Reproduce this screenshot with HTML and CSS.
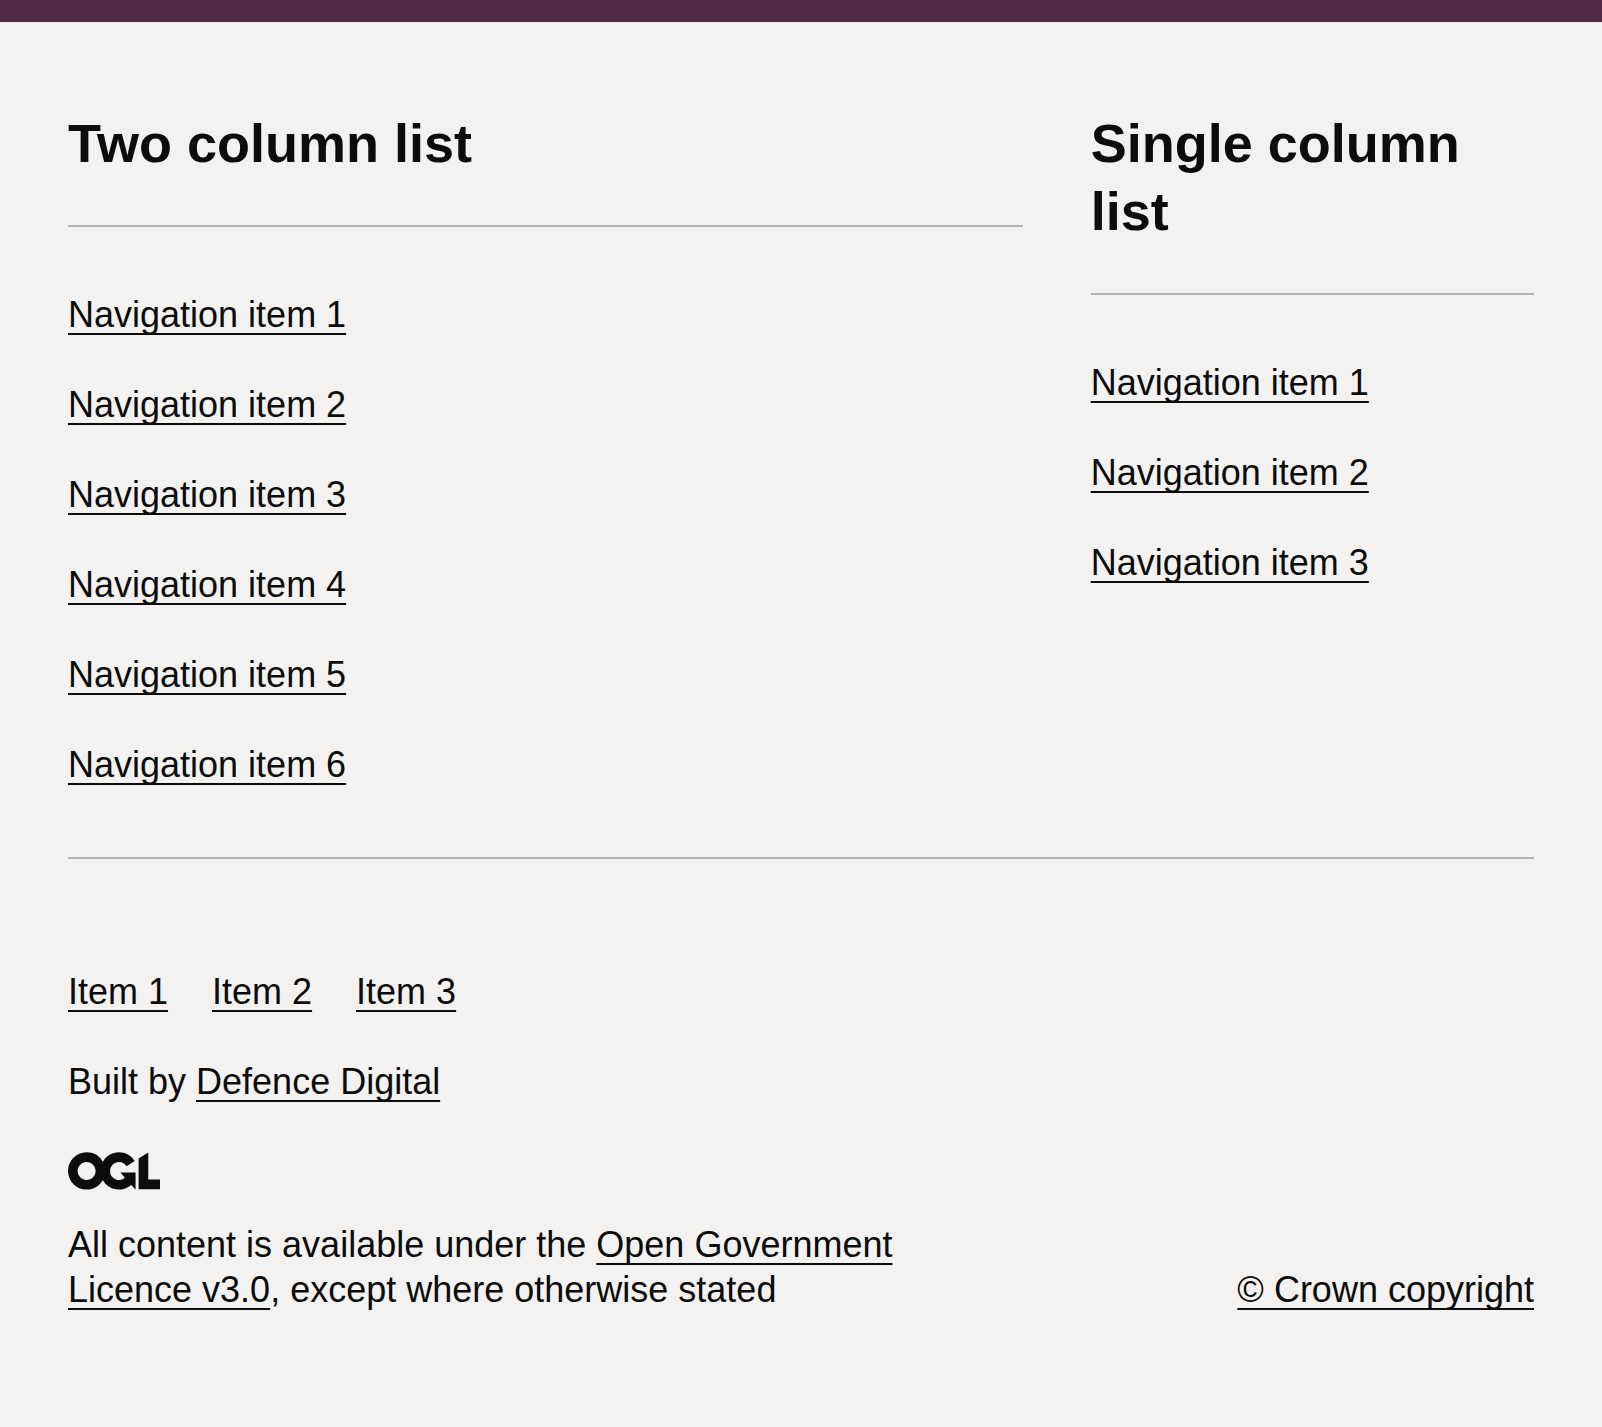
FILE: index.html
```html
<!DOCTYPE html>
<html lang="en">
<head>
<meta charset="utf-8">
<meta name="viewport" content="width=device-width, initial-scale=1">
<title>Footer</title>
<link rel="stylesheet" href="styles.css">
</head>
<body>
<footer class="footer">
  <div class="footer-navigation">
    <section class="footer-section footer-section-wide">
      <h2 class="footer-heading">Two column list</h2>
      <ul class="footer-list">
        <li><a class="footer-link" href="#1">Navigation item 1</a></li>
        <li><a class="footer-link" href="#2">Navigation item 2</a></li>
        <li><a class="footer-link" href="#3">Navigation item 3</a></li>
        <li><a class="footer-link" href="#4">Navigation item 4</a></li>
        <li><a class="footer-link" href="#5">Navigation item 5</a></li>
        <li><a class="footer-link" href="#6">Navigation item 6</a></li>
      </ul>
    </section>
    <section class="footer-section">
      <h2 class="footer-heading">Single column list</h2>
      <ul class="footer-list">
        <li><a class="footer-link" href="#1">Navigation item 1</a></li>
        <li><a class="footer-link" href="#2">Navigation item 2</a></li>
        <li><a class="footer-link" href="#3">Navigation item 3</a></li>
      </ul>
    </section>
  </div>
  <hr class="footer-break">
  <div class="footer-meta">
    <div class="footer-meta-main">
      <ul class="footer-inline-list">
        <li><a class="footer-link" href="#1">Item 1</a></li>
        <li><a class="footer-link" href="#2">Item 2</a></li>
        <li><a class="footer-link" href="#3">Item 3</a></li>
      </ul>
      <p class="footer-credit">Built by <a class="footer-link" href="#digital">Defence Digital</a></p>
      <svg class="footer-licence-logo" aria-hidden="true" focusable="false" viewBox="0 0 483.2 195.7"><path fill="currentColor" d="M421.5 142.8V.1l-50.7 32.3v161.1h112.4v-50.7zm-122.3-9.6A47.12 47.12 0 0 1 221 97.8c0-26 21.1-47.1 47.1-47.1 16.7 0 31.4 8.7 39.7 21.8l42.7-27.2A97.63 97.63 0 0 0 268.1 0c-36.5 0-68.3 20.1-85.1 49.7A98 98 0 0 0 97.8 0C43.9 0 0 43.9 0 97.8s43.9 97.8 97.8 97.8c36.5 0 68.3-20.1 85.1-49.7a97.76 97.76 0 0 0 149.6 25.4l19.4 22.2h3v-87.8h-80l24.3 27.5zM97.8 145c-26 0-47.1-21.1-47.1-47.1s21.1-47.1 47.1-47.1 47.1 21.1 47.1 47.1S123.8 145 97.8 145"/></svg>
      <p class="footer-licence">All content is available under the <a class="footer-link" href="#licence">Open Government Licence v3.0</a>, except where otherwise stated</p>
    </div>
    <a class="footer-link" href="#copyright">© Crown copyright</a>
  </div>
</footer>
</body>
</html>
```
FILE: styles.css
```css
* {
  box-sizing: border-box;
}

body {
  margin: 0;
  background: #fff;
}

.footer {
  padding: 87px 68px 115px;
  border-top: 22px solid #532a45;
  background: #f3f2f1;
  color: #0b0c0c;
  font: 36px/45px "Liberation Sans", Arial, sans-serif;
}

.footer-navigation {
  display: grid;
  grid-template-columns: repeat(3, minmax(0, 1fr));
  gap: 68px;
}

.footer-section-wide {
  grid-column: span 2;
}

.footer-heading {
  margin: 0 0 65px;
  padding-bottom: 48px;
  border-bottom: 2px solid #b1b4b6;
  font-size: 54px;
  line-height: 68px;
}

.footer-list,
.footer-inline-list {
  display: flex;
  margin: 0;
  padding: 0;
  list-style: none;
}

.footer-list {
  flex-direction: column;
  gap: 45px;
}

.footer-inline-list {
  flex-wrap: wrap;
  gap: 44px;
}

.footer-link {
  color: inherit;
  text-decoration: underline;
  text-decoration-thickness: 2px;
  text-decoration-skip-ink: none;
  text-underline-offset: 6px;
}

.footer-break {
  height: 2px;
  margin: 70px 0 110px;
  border: 0;
  background: #b1b4b6;
}

.footer-meta {
  display: flex;
  align-items: flex-end;
  justify-content: space-between;
}

.footer-meta-main {
  flex: 0 1 62%;
}

.footer-credit {
  margin: 45px 0 48px;
}

.footer-licence-logo {
  display: block;
  width: 92px;
  height: 38px;
  margin-bottom: 32px;
}

.footer-licence {
  margin: 0;
}
```
